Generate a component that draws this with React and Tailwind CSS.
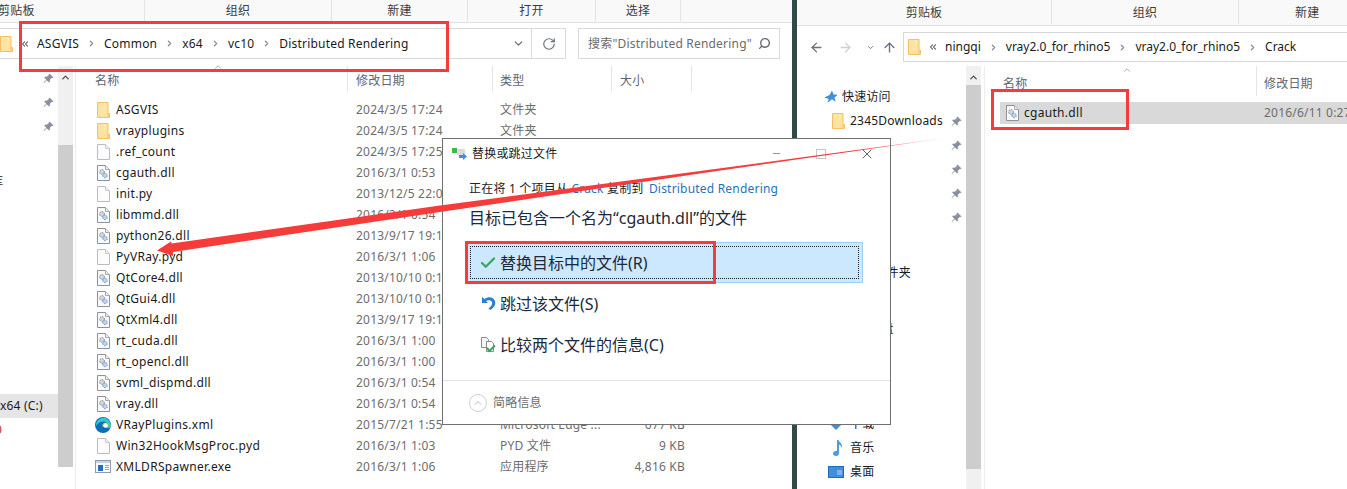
import { ArrowLeft, ArrowRight, ArrowUp, ChevronDown, ChevronRight, ChevronUp, ChevronsLeft, RotateCw, Search, X, Minus, Check } from "lucide-react";

const files = [
  { name: "ASGVIS", date: "2024/3/5 17:24", type: "文件夹", size: "", icon: "folder" },
  { name: "vrayplugins", date: "2024/3/5 17:24", type: "文件夹", size: "", icon: "folder" },
  { name: ".ref_count", date: "2024/3/5 17:25", type: "文件", size: "1 KB", icon: "doc" },
  { name: "cgauth.dll", date: "2016/3/1 0:53", type: "应用程序扩展", size: "59 KB", icon: "dll" },
  { name: "init.py", date: "2013/12/5 22:04", type: "PY 文件", size: "1 KB", icon: "doc" },
  { name: "libmmd.dll", date: "2016/3/1 0:54", type: "应用程序扩展", size: "3,012 KB", icon: "dll" },
  { name: "python26.dll", date: "2013/9/17 19:12", type: "应用程序扩展", size: "2,104 KB", icon: "dll" },
  { name: "PyVRay.pyd", date: "2016/3/1 1:06", type: "PYD 文件", size: "1,840 KB", icon: "doc" },
  { name: "QtCore4.dll", date: "2013/10/10 0:14", type: "应用程序扩展", size: "2,340 KB", icon: "dll" },
  { name: "QtGui4.dll", date: "2013/10/10 0:14", type: "应用程序扩展", size: "8,120 KB", icon: "dll" },
  { name: "QtXml4.dll", date: "2013/9/17 19:12", type: "应用程序扩展", size: "340 KB", icon: "dll" },
  { name: "rt_cuda.dll", date: "2016/3/1 1:00", type: "应用程序扩展", size: "4,210 KB", icon: "dll" },
  { name: "rt_opencl.dll", date: "2016/3/1 1:00", type: "应用程序扩展", size: "3,980 KB", icon: "dll" },
  { name: "svml_dispmd.dll", date: "2016/3/1 0:54", type: "应用程序扩展", size: "6,120 KB", icon: "dll" },
  { name: "vray.dll", date: "2016/3/1 0:54", type: "应用程序扩展", size: "9,430 KB", icon: "dll" },
  { name: "VRayPlugins.xml", date: "2015/7/21 1:55", type: "Microsoft Edge ...", size: "677 KB", icon: "edge" },
  { name: "Win32HookMsgProc.pyd", date: "2016/3/1 1:03", type: "PYD 文件", size: "9 KB", icon: "doc" },
  { name: "XMLDRSpawner.exe", date: "2016/3/1 1:06", type: "应用程序", size: "4,816 KB", icon: "exe" },
];

function FolderIcon() {
  return (
    <svg width="13" height="16" viewBox="0 0 13 16" className="shrink-0">
      <path d="M.5.5h10.5v11h1.500v4H.5z" fill="#ffe3a3" stroke="#f4c063" />
      <path d="M11 11.500v4" stroke="#f4c063" />
      <path d="M7 2h1M8 4h1M7 6h1" stroke="#fff6dc" />
    </svg>
  );
}

function DocIcon() {
  return (
    <svg width="13" height="16" viewBox="0 0 13 16" className="shrink-0">
      <path d="M.5.5h8l4 4v11H.5z" fill="#fcfcfc" stroke="#b9bcc2" />
      <path d="M8.500.5v4h4" fill="#f0f0f0" stroke="#c9cbd0" />
    </svg>
  );
}

function DllIcon() {
  return (
    <svg width="13" height="16" viewBox="0 0 13 16" className="shrink-0">
      <path d="M.5.5h8l4 4v11H.5z" fill="#fbfbfb" stroke="#8d919b" />
      <path d="M8.500.5v4h4" fill="#eee" stroke="#a5a8b0" />
      <circle cx="5" cy="7" r="2.400" fill="#d4d6db" stroke="#7f8590" strokeDasharray="1.500 1" />
      <circle cx="8" cy="10.500" r="2.200" fill="#b9d6ee" stroke="#5f94c4" strokeDasharray="1.500 1" />
    </svg>
  );
}

function EdgeIcon() {
  return (
    <svg width="16" height="16" viewBox="0 0 16 16" className="shrink-0 -ml-[2px] mr-[-1px]">
      <circle cx="8" cy="8" r="8" fill="#0f6cbd" />
      <path d="M1 9C1 3 6 0 10 1c3 .7 5.500 3.500 5.800 7.500L8 9c.5-2 3-2 4-3C10 3.500 4 4 1 9z" fill="#37c6d0" />
      <path d="M7 9c0-2.500 2-3.500 4-3.500S15.800 7 15.800 9.500c0 1-1 1.500-3 1.500-2.500 0-2-1-5.800-1.500z" fill="#5fd068" />
      <circle cx="10.500" cy="8.500" r="2.200" fill="#fff" />
    </svg>
  );
}

function ExeIcon() {
  return (
    <svg width="16" height="13" viewBox="0 0 16 13" className="shrink-0 -ml-[2px] mr-[-1px]">
      <rect x=".5" y=".5" width="15" height="12" fill="#f6f8fb" stroke="#8e99ab" />
      <path d="M1 1h14v2H1z" fill="#c9d2df" />
      <rect x="3" y="5" width="5" height="6" fill="#1f6fc4" />
      <path d="M10 5.500h4M10 7.500h4M10 9.500h4" stroke="#9aa3b0" />
    </svg>
  );
}

function FileIcon({ kind }) {
  if (kind === "folder") return <FolderIcon />;
  if (kind === "dll") return <DllIcon />;
  if (kind === "edge") return <EdgeIcon />;
  if (kind === "exe") return <ExeIcon />;
  return <DocIcon />;
}

function Pin() {
  return (
    <svg width="11" height="11" viewBox="0 0 11 11">
      <path d="M6.500.5l4 4-1 .6-1-.2L6.800 7l.2 1.500-1 1-2.200-2.200L1 10l-.4-.4 2.700-2.900L1.200 4.600l1-1 1.500.2L5.900 2l-.2-.8z" fill="#8b90a0" />
    </svg>
  );
}

function Crumbs({ items, className = "" }) {
  return (
    <div className={`flex items-center text-[#1a1a1a] ${className}`}>
      {items.map((item, i) => (
        <div key={i} className="flex items-center">
          {i > 0 && <ChevronRight size={9} strokeWidth={3.5} className="mx-[8px] text-[#8a8e9a]" />}
          <span>{item}</span>
        </div>
      ))}
    </div>
  );
}

function RibbonLabel({ className, children }) {
  return <div className={`flex items-center justify-center h-[21px] border-r border-[#e4e4e4] text-[#3c3c3c] ${className}`}>{children}</div>;
}

function Scrollbar({ thumbTop, thumbHeight }) {
  return (
    <div className="w-[15px] shrink-0 h-full bg-[#f0f0f0] flex flex-col">
      <div className="flex justify-center pt-[6px]" style={{ height: thumbTop }}>
        <ChevronUp size={11} strokeWidth={3} className="text-[#505050]" />
      </div>
      <div className="bg-[#cdcdcd]" style={{ height: thumbHeight }} />
    </div>
  );
}

function LeftWindow() {
  return (
    <div className="w-[792px] shrink-0 h-full flex flex-col bg-white">
      <div className="flex h-[23px] shrink-0 bg-[#f9f9f9] border-b border-[#e1e1e1] overflow-hidden">
        <RibbonLabel className="w-[145px] !justify-start">
          <span className="-ml-[2px]">剪贴板</span>
        </RibbonLabel>
        <RibbonLabel className="w-[187px]">组织</RibbonLabel>
        <RibbonLabel className="w-[136px]">新建</RibbonLabel>
        <RibbonLabel className="w-[128px]">打开</RibbonLabel>
        <RibbonLabel className="w-[85px]">选择</RibbonLabel>
      </div>

      {/* Address row */}
      <div className="h-[43px] shrink-0 flex items-start pt-[5px]">
        <div className="w-[566px] h-[31px] border border-l-0 border-[#d9d9d9] flex items-center">
          <div className="flex items-center flex-1">
            <FolderIcon />
            <ChevronsLeft size={10} strokeWidth={2.500} className="ml-[7px] mr-[7px] text-[#555]" />
            <Crumbs items={["ASGVIS", "Common", "x64", "vc10", "Distributed Rendering"]} />
          </div>
          <div className="w-[22px] flex justify-center mr-[2px]">
            <ChevronDown size={13} strokeWidth={2.500} className="text-[#6a6f7a]" />
          </div>
          <div className="w-[34px] h-full border-l border-[#d9d9d9] flex items-center justify-center">
            <RotateCw size={14} strokeWidth={2} className="text-[#6a6f7a]" />
          </div>
        </div>
        <div className="ml-[12px] w-[202px] h-[31px] border border-[#d9d9d9] flex items-center pl-[9px] pr-[8px] justify-between text-[#6b6b6b]">
          <span className="whitespace-nowrap">搜索"Distributed Rendering"</span>
          <Search size={13} strokeWidth={2.500} className="text-[#5f6570] -scale-x-100" />
        </div>
      </div>

      {/* Body */}
      <div className="flex-1 flex min-h-0">
        <div className="w-[58px] shrink-0 flex flex-col text-[#1a1a1a] overflow-hidden">
          {[0, 1, 2].map((i) => (
            <div key={i} className="h-[24px] shrink-0 flex items-center justify-end pr-[4px]">
              <Pin />
            </div>
          ))}
          <div className="h-[32px] shrink-0" />
          <div className="h-[24px] shrink-0 flex items-center -ml-[9px]">库</div>
          <div className="h-[200px] shrink-0" />
          <div className="h-[24px] shrink-0 flex items-center bg-[#e5e5e5] whitespace-nowrap">x64 (C:)</div>
          <div className="h-[24px] shrink-0 flex items-center -ml-[5px] text-[#c03030]">0</div>
        </div>
        <div className="pb-[22px] h-full">
          <Scrollbar thumbTop={79} thumbHeight={322} />
        </div>
        <div className="w-[3px] shrink-0 border-r border-[#eeeeee]" />

        <div className="flex-1 min-w-0 flex flex-col">
          <div className="relative flex h-[33px] shrink-0 text-[#5f6470]">
            <ChevronUp size={10} strokeWidth={1.500} className="absolute left-[137px] -top-[4px] text-[#777]" />
            <div className="w-[272px] h-[26px] border-r border-[#e5e5e5] pl-[19px] pt-[3px] flex items-center">名称</div>
            <div className="w-[145px] h-[26px] border-r border-[#e5e5e5] pl-[8px] pt-[3px] flex items-center">修改日期</div>
            <div className="w-[119px] h-[26px] border-r border-[#e5e5e5] pl-[7px] pt-[3px] flex items-center">类型</div>
            <div className="w-[80px] h-[26px] border-r border-[#e5e5e5] pl-[8px] pt-[3px] flex items-center">大小</div>
          </div>
          {files.map((f) => (
            <div key={f.name} className="flex h-[21px] shrink-0 items-center whitespace-nowrap">
              <div className="w-[272px] pl-[21px] flex items-center gap-[6px] text-[#1a1a1a] tracking-[0.3px]">
                <FileIcon kind={f.icon} />
                <span>{f.name}</span>
              </div>
              <div className="w-[145px] pl-[8px] text-[#6d6d6d]">{f.date}</div>
              <div className="w-[112px] pl-[7px] text-[#6d6d6d]">{f.type}</div>
              <div className="w-[80px] text-right text-[#6d6d6d]">{f.size}</div>
            </div>
          ))}
        </div>
      </div>
    </div>
  );
}

function NavRow({ icon, label }) {
  return (
    <div className="h-[24px] shrink-0 flex items-center">
      <div className="w-[53px] flex justify-end pr-[7px] shrink-0">{icon}</div>
      <span className="whitespace-nowrap">{label}</span>
    </div>
  );
}

function RightWindow() {
  return (
    <div className="flex-1 min-w-0 h-full flex flex-col bg-white overflow-hidden">
      <div className="flex h-[26px] shrink-0 bg-[#f9f9f9] border-b border-[#e1e1e1]">
        <RibbonLabel className="w-[255px] h-[24px]! pt-[2px]">剪贴板</RibbonLabel>
        <RibbonLabel className="w-[187px] h-[24px]! pt-[2px]">组织</RibbonLabel>
        <RibbonLabel className="flex-1 h-[24px]! pt-[2px] !border-r-0 !justify-start"><span className="ml-[56px]">新建</span></RibbonLabel>
      </div>

      <div className="h-[40px] shrink-0 flex items-start pt-[6px]">
        <div className="w-[106px] h-[30px] flex items-center pl-[12px] shrink-0">
          <ArrowLeft size={15} strokeWidth={2.200} className="text-[#6b7280]" />
          <ArrowRight size={15} strokeWidth={2.200} className="ml-[14px] text-[#d0d0d0]" />
          <ChevronDown size={9} strokeWidth={2.500} className="ml-[13px] text-[#777]" />
          <ArrowUp size={15} strokeWidth={2.200} className="ml-[7px] text-[#6b7280]" />
        </div>
        <div className="flex-1 h-[30px] border border-r-0 border-[#d9d9d9] flex items-center pl-[4px]">
          <FolderIcon />
          <ChevronsLeft size={10} strokeWidth={2.500} className="ml-[7px] mr-[7px] text-[#555]" />
          <Crumbs className="tracking-normal" items={["ningqi", "vray2.0_for_rhino5", "vray2.0_for_rhino5", "Crack"]} />
        </div>
      </div>

      <div className="flex-1 flex min-h-0">
        <div className="w-[169px] shrink-0 flex flex-col pt-[19px] text-[#1a1a1a] overflow-hidden">
          <div className="h-[24px] shrink-0 flex items-center pl-[27px] gap-[4px]">
            <svg width="14" height="14" viewBox="0 0 14 14" className="shrink-0">
              <path d="M8 .5l1.500 4 4.300.2-3.300 2.700 1.200 4.300L8 9.300 3.500 13l1.200-4L.3 7.500 5.500 5z" fill="#3f8fdc" />
            </svg>
            <span>快速访问</span>
          </div>
          <div className="h-[24px] shrink-0 flex items-center pl-[35px] pr-[4px]">
            <FolderIcon />
            <span className="ml-[5px] flex-1">2345Downloads</span>
            <Pin />
          </div>
          {[0, 1, 2, 3].map((i) => (
            <div key={i} className="h-[24px] shrink-0 flex items-center justify-end pr-[4px]">
              <Pin />
            </div>
          ))}
          <div className="h-[24px] shrink-0 mt-[8px] flex items-center pl-[56px]">此电脑</div>
          <div className="h-[24px] shrink-0 flex items-center pl-[53px]">新建文件夹</div>
          <div className="h-[24px] shrink-0 mt-[32px] flex items-center pl-[48px]">百度网盘</div>
          <div className="h-[71px] shrink-0" />
          <NavRow
            label="下载"
            icon={
              <svg width="14" height="14" viewBox="0 0 14 14">
                <path d="M4 0h6v6h4l-7 7-7-7h4z" fill="#3f8fdc" />
              </svg>
            }
          />
          <NavRow
            label="音乐"
            icon={
              <svg width="10" height="16" viewBox="0 0 10 16">
                <path d="M4 0h1.500c.3 2 4.500 3.500 3.500 8-.5-2-2-3-3-3.500V13c0 1.700-1.200 3-3 3s-3-1-3-2.500S1.500 11 3 11c.4 0 .7 0 1 .1z" fill="#4a9be0" />
              </svg>
            }
          />
          <NavRow
            label="桌面"
            icon={
              <svg width="16" height="12" viewBox="0 0 16 12" className="-mr-[1px]">
                <rect x=".5" y=".5" width="15" height="11" fill="#3f8fdc" stroke="#1d6bb8" />
                <path d="M9 4h5v5H9z" fill="#7ab4ea" />
              </svg>
            }
          />
        </div>
        <Scrollbar thumbTop={19} thumbHeight={384} />
        <div className="w-[4px] shrink-0 border-r border-[#eeeeee]" />

        <div className="flex-1 min-w-0 flex flex-col">
          <div className="relative flex h-[36px] shrink-0 text-[#5f6470]">
            <ChevronUp size={10} strokeWidth={1.500} className="absolute left-[137px] -top-[1px] text-[#777]" />
            <div className="w-[272px] h-[30px] border-r border-[#e5e5e5] pl-[18px] pt-[6px] flex items-center">名称</div>
            <div className="pl-[7px] pt-[6px] h-[30px] flex items-center">修改日期</div>
          </div>
          <div className="ml-[15px] h-[22px] bg-[#d9d9d9] flex items-center whitespace-nowrap overflow-hidden">
            <div className="w-[257px] shrink-0 pl-[6px] flex items-center gap-[5px] text-[#1a1a1a] tracking-[0.3px]">
              <DllIcon />
              <span>cgauth.dll</span>
            </div>
            <span className="pl-[7px] text-[#6d6d6d] shrink-0">2016/6/11 0:27</span>
          </div>
        </div>
      </div>
    </div>
  );
}

function Option({ icon, label, active }) {
  return (
    <div className={`h-[41px] flex items-center ${active ? "border border-[#99d1ff] bg-[#cce8ff] p-[3px]" : "px-[4px]"}`}>
      <div className={`flex-1 h-full flex items-center gap-[3px] ${active ? "pl-[8px] border border-dotted border-[#222]" : "pl-[9px]"}`}>
        <div className="w-[18px] flex justify-center shrink-0">{icon}</div>
        <span className="text-[16px] tracking-normal text-[#1a2a3a] whitespace-nowrap">{label}</span>
      </div>
    </div>
  );
}

function ReplaceDialog() {
  return (
    <div className="absolute left-[442px] top-[138px] w-[449px] h-[287px] bg-white border border-[#6f6f6f] flex flex-col">
      <div className="h-[29px] shrink-0 flex items-center pl-[9px] text-[#222]">
        <svg width="15" height="13" viewBox="0 0 15 13" className="shrink-0">
          <rect x="0" y="1" width="5" height="5" fill="#3fb54a" />
          <rect x="5" y="2" width="8" height="6" fill="#d7dbe0" />
          <path d="M7 8h4V6l4 3.500L11 13v-2H7z" fill="#3f8fdc" />
        </svg>
        <span className="ml-[5px] flex-1">替换或跳过文件</span>
        <Minus size={11} strokeWidth={1} className="text-[#222] mr-[34px]" />
        <div className="w-[10px] h-[10px] border border-[#c6c6c6] mr-[33px]" />
        <X size={16} strokeWidth={1} className="text-[#111] mr-[15px]" />
      </div>

      <div className="h-[27px] shrink-0 flex items-center pl-[26px] pt-[15px] text-[#222] whitespace-nowrap">
        正在将 1 个项目从&nbsp;<span className="text-[#1f72b8]">Crack</span>&nbsp;复制到&nbsp;<span className="text-[#1f72b8] ml-[2px]">Distributed Rendering</span>
      </div>
      <div className="h-[37px] shrink-0 flex items-center pl-[26px] pt-[8px] text-[16px] tracking-normal text-[#1a2a3a] whitespace-nowrap">
        目标已包含一个名为“cgauth.dll”的文件
      </div>

      <div className="ml-[23px] mr-[27px] mt-[10px] flex flex-col">
        <Option active label="替换目标中的文件(R)" icon={<Check size={18} strokeWidth={3} className="text-[#3aa55a]" />} />
        <Option
          label="跳过该文件(S)"
          icon={
            <svg width="15" height="15" viewBox="0 0 15 15">
              <path d="M1 1v6h6L5 5c2-1.500 5-1 6 1 .8 2-.5 4-3.500 6.500l2 1.500C13.500 11 15 8.500 14 5 12.500 1 7.500 0 3.500 3z" fill="#2a7fd0" />
            </svg>
          }
        />
        <Option
          label="比较两个文件的信息(C)"
          icon={
            <svg width="15" height="16" viewBox="0 0 15 16">
              <path d="M.5.5h5l2 2v8h-7z" fill="#f4f4f4" stroke="#8a8a8a" />
              <path d="M5.500 4.500h5l2 2v8h-7z" fill="#fff" stroke="#8a8a8a" />
              <path d="M6 11l2.500 3L14 8.500" fill="none" stroke="#3aa55a" strokeWidth="2" />
            </svg>
          }
        />
      </div>

      <div className="mt-auto h-[44px] shrink-0 border-t border-[#e3e3e3] flex items-center pl-[26px] text-[#6d6d6d]">
        <div className="w-[18px] h-[18px] rounded-full border border-[#cfcfcf] flex items-center justify-center">
          <ChevronUp size={12} strokeWidth={1.500} className="text-[#a0a0a0]" />
        </div>
        <span className="ml-[6px]">简略信息</span>
      </div>
    </div>
  );
}

export default function App() {
  return (
    <div
      className="relative w-[1347px] h-[489px] overflow-hidden flex bg-white text-[12px] tracking-[0.2px]"
      style={{ fontFamily: '"Noto Sans", "Noto Sans CJK SC", sans-serif' }}
    >
      <LeftWindow />
      <div className="w-[5px] shrink-0 bg-[#2f4a48]" />
      <RightWindow />
      <ReplaceDialog />

      {/* Red annotations */}
      <div className="absolute left-[19px] top-[21px] w-[430px] h-[51px] border-[3px] border-[#f63b3b]" />
      <div className="absolute left-[991px] top-[89px] w-[138px] h-[41px] border-[3px] border-[#f63b3b]" />
      <div className="absolute left-[465px] top-[241px] w-[251px] h-[43px] border-[3px] border-[#f63b3b]" />
      <svg width="1347" height="489" className="absolute left-0 top-0 pointer-events-none">
        <defs>
          <linearGradient id="fade" x1="157" y1="0" x2="960" y2="0" gradientUnits="userSpaceOnUse">
            <stop offset="0" stopColor="#f63b3b" />
            <stop offset="0.88" stopColor="#f63b3b" />
            <stop offset="1" stopColor="#f63b3b" stopOpacity="0" />
          </linearGradient>
        </defs>
        <path
          d="M157 250.500L171 241.500L171.500 243.500L440 205.500L700 171L960 136L700 173.500L440 212L173 252L173 256z"
          fill="url(#fade)"
        />
      </svg>
    </div>
  );
}
